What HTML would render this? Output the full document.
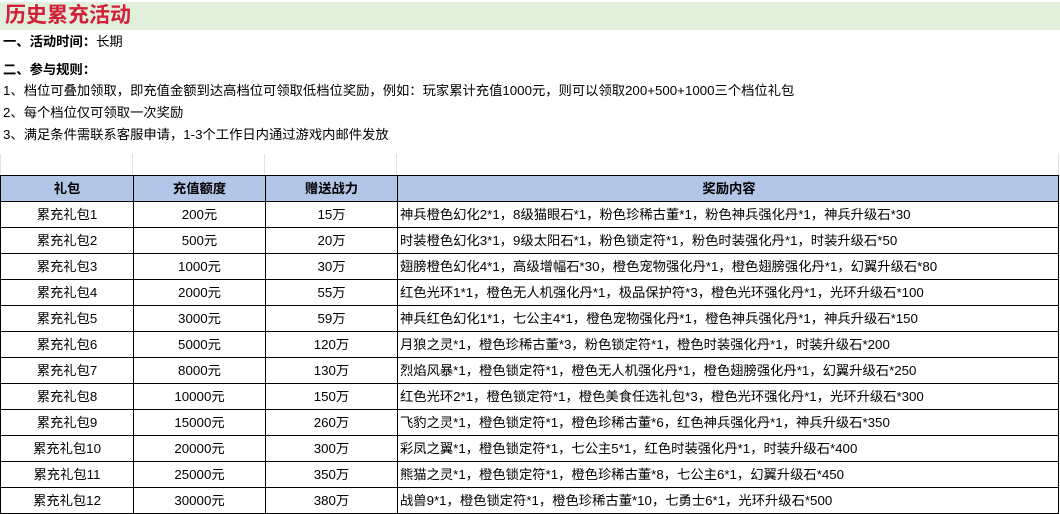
<!DOCTYPE html><html><head><meta charset="utf-8"><style>
body{margin:0;width:1060px;height:514px;overflow:hidden;background:#fff;font-family:"Liberation Sans","Noto Sans CJK SC",sans-serif;font-size:13.3px;color:#000;position:relative}
.t{position:absolute;left:0;top:2px;width:1060px;height:28px;background:#e2efda}
.t span{position:absolute;left:5px;top:0;font-size:21px;font-weight:bold;color:#d0203a;line-height:28px}
.l{position:absolute;left:3px;white-space:nowrap;line-height:16px}
.b{font-weight:bold}
.g{position:absolute;top:154px;height:21px;border-left:1px solid #e3e3e3}
table{position:absolute;left:0;top:175px;border-collapse:collapse;width:1059px;table-layout:fixed}
td{border:1px solid #000;height:25px;padding:0;text-align:center;white-space:nowrap;overflow:hidden;line-height:25px}
tr:first-child td{background:#b4c6e7;font-weight:bold;height:25px}
td:nth-child(4){text-align:left;padding-left:2px}
tr:first-child td:nth-child(4){text-align:center}
</style></head><body>
<div class="t"><span>历史累充活动</span></div>
<div class="l b" style="top:34px">一、活动时间：<span style="font-weight:normal">长期</span></div>
<div class="l b" style="top:62px">二、参与规则：</div>
<div class="l" style="top:83px">1、档位可叠加领取，即充值金额到达高档位可领取低档位奖励，例如：玩家累计充值1000元，则可以领取200+500+1000三个档位礼包</div>
<div class="l" style="top:105px">2、每个档位仅可领取一次奖励</div>
<div class="l" style="top:127px">3、满足条件需联系客服申请，1-3个工作日内通过游戏内邮件发放</div>
<div class="g" style="left:0"></div><div class="g" style="left:132px"></div><div class="g" style="left:264px"></div><div class="g" style="left:396px"></div><div class="g" style="left:1058px"></div>
<table><colgroup><col style="width:133px"><col style="width:132px"><col style="width:132px"><col></colgroup>
<tr><td>礼包</td><td>充值额度</td><td>赠送战力</td><td>奖励内容</td></tr>
<tr><td>累充礼包1</td><td>200元</td><td>15万</td><td>神兵橙色幻化2*1，8级猫眼石*1，粉色珍稀古董*1，粉色神兵强化丹*1，神兵升级石*30</td></tr>
<tr><td>累充礼包2</td><td>500元</td><td>20万</td><td>时装橙色幻化3*1，9级太阳石*1，粉色锁定符*1，粉色时装强化丹*1，时装升级石*50</td></tr>
<tr><td>累充礼包3</td><td>1000元</td><td>30万</td><td>翅膀橙色幻化4*1，高级增幅石*30，橙色宠物强化丹*1，橙色翅膀强化丹*1，幻翼升级石*80</td></tr>
<tr><td>累充礼包4</td><td>2000元</td><td>55万</td><td>红色光环1*1，橙色无人机强化丹*1，极品保护符*3，橙色光环强化丹*1，光环升级石*100</td></tr>
<tr><td>累充礼包5</td><td>3000元</td><td>59万</td><td>神兵红色幻化1*1，七公主4*1，橙色宠物强化丹*1，橙色神兵强化丹*1，神兵升级石*150</td></tr>
<tr><td>累充礼包6</td><td>5000元</td><td>120万</td><td>月狼之灵*1，橙色珍稀古董*3，粉色锁定符*1，橙色时装强化丹*1，时装升级石*200</td></tr>
<tr><td>累充礼包7</td><td>8000元</td><td>130万</td><td>烈焰风暴*1，橙色锁定符*1，橙色无人机强化丹*1，橙色翅膀强化丹*1，幻翼升级石*250</td></tr>
<tr><td>累充礼包8</td><td>10000元</td><td>150万</td><td>红色光环2*1，橙色锁定符*1，橙色美食任选礼包*3，橙色光环强化丹*1，光环升级石*300</td></tr>
<tr><td>累充礼包9</td><td>15000元</td><td>260万</td><td>飞豹之灵*1，橙色锁定符*1，橙色珍稀古董*6，红色神兵强化丹*1，神兵升级石*350</td></tr>
<tr><td>累充礼包10</td><td>20000元</td><td>300万</td><td>彩凤之翼*1，橙色锁定符*1，七公主5*1，红色时装强化丹*1，时装升级石*400</td></tr>
<tr><td>累充礼包11</td><td>25000元</td><td>350万</td><td>熊猫之灵*1，橙色锁定符*1，橙色珍稀古董*8，七公主6*1，幻翼升级石*450</td></tr>
<tr><td>累充礼包12</td><td>30000元</td><td>380万</td><td>战兽9*1，橙色锁定符*1，橙色珍稀古董*10，七勇士6*1，光环升级石*500</td></tr>
</table>
</body></html>
